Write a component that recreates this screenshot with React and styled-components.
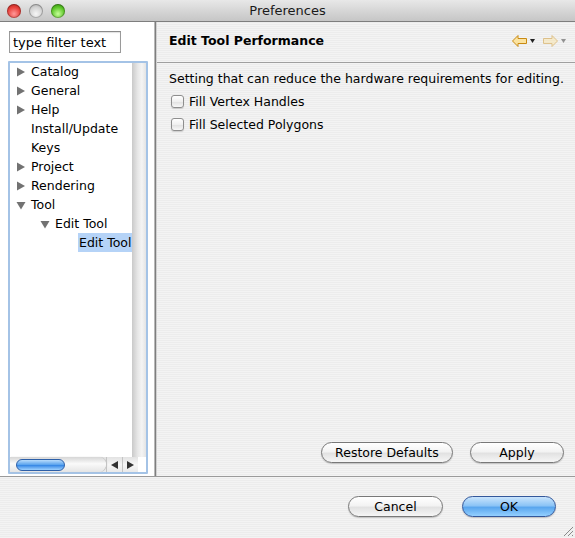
import React from 'react';
import styled, { createGlobalStyle } from 'styled-components';

const GlobalStyle = createGlobalStyle`
    html, body {
        margin: 0;
        padding: 0;
        width: 575px;
        height: 538px;
        overflow: hidden;
        font-family: 'DejaVu Sans', 'Liberation Sans', sans-serif;
        font-size: 12px;
        color: #000;
    }
`;

const TREE = [
    { label: 'Catalog', level: 0, toggle: 'closed' },
    { label: 'General', level: 0, toggle: 'closed' },
    { label: 'Help', level: 0, toggle: 'closed' },
    { label: 'Install/Update', level: 0 },
    { label: 'Keys', level: 0 },
    { label: 'Project', level: 0, toggle: 'closed' },
    { label: 'Rendering', level: 0, toggle: 'closed' },
    { label: 'Tool', level: 0, toggle: 'open' },
    { label: 'Edit Tool', level: 1, toggle: 'open' },
    { label: 'Edit Tool', level: 2, selected: true },
];

const NavArrow = ({ dir, faded }) => (
    <ArrowGroup faded={faded}>
        <svg width="15" height="12" viewBox="0 0 15 12">
            <path
                d={
                    dir === 'left'
                        ? 'M0.5 6 L6 0.5 L6 3.5 L14.5 3.5 L14.5 8.5 L6 8.5 L6 11.5 Z'
                        : 'M14.5 6 L9 0.5 L9 3.5 L0.5 3.5 L0.5 8.5 L9 8.5 L9 11.5 Z'
                }
                fill="#fbe3a0"
                stroke="#c98a12"
                strokeWidth="1"
                strokeLinejoin="round"
            />
        </svg>
        <svg width="5" height="4" viewBox="0 0 5 4">
            <path d="M0 0 L5 0 L2.5 4 Z" fill="#222" />
        </svg>
    </ArrowGroup>
);

const Twisty = ({ open }) => (
    <svg width="10" height="10" viewBox="0 0 10 10">
        {open ? (
            <path d="M0.5 2 L9.5 2 L5 9.5 Z" fill="#727272" />
        ) : (
            <path d="M1 0.5 L9 5 L1 9.5 Z" fill="#727272" />
        )}
    </svg>
);

const App = () => {
    return (
        <Window>
            <GlobalStyle />
            <TitleBar>
                <Lights>
                    <Light color="red" />
                    <Light color="gray" />
                    <Light color="green" />
                </Lights>
                <Title>Preferences</Title>
            </TitleBar>
            <Body>
                <LeftPane>
                    <Filter value="type filter text" readOnly />
                    <TreeBox>
                        <TreeMain>
                            <TreeList>
                                {TREE.map((item, i) => (
                                    <TreeRow key={i} level={item.level}>
                                        <TwistySlot>
                                            {item.toggle && (
                                                <Twisty open={item.toggle === 'open'} />
                                            )}
                                        </TwistySlot>
                                        <TreeLabel selected={item.selected}>
                                            {item.label}
                                        </TreeLabel>
                                    </TreeRow>
                                ))}
                            </TreeList>
                            <VScroll />
                        </TreeMain>
                        <HScrollRow>
                            <HTrack>
                                <HThumb />
                            </HTrack>
                            <ScrollBtn>
                                <svg width="7" height="8" viewBox="0 0 7 8">
                                    <path d="M0 4 L7 0 L7 8 Z" fill="#333" />
                                </svg>
                            </ScrollBtn>
                            <ScrollBtn>
                                <svg width="7" height="8" viewBox="0 0 7 8">
                                    <path d="M7 4 L0 0 L0 8 Z" fill="#333" />
                                </svg>
                            </ScrollBtn>
                            <Corner />
                        </HScrollRow>
                    </TreeBox>
                </LeftPane>
                <RightPane>
                    <PageHeader>
                        <PageTitle>Edit Tool Performance</PageTitle>
                        <NavArrows>
                            <NavArrow dir="left" />
                            <NavArrow dir="right" faded />
                        </NavArrows>
                    </PageHeader>
                    <PageContent>
                        <Description>
                            Setting that can reduce the hardware requirements for editing.
                        </Description>
                        <CheckRow>
                            <CheckBox />
                            Fill Vertex Handles
                        </CheckRow>
                        <CheckRow>
                            <CheckBox />
                            Fill Selected Polygons
                        </CheckRow>
                    </PageContent>
                    <PageButtons>
                        <PillButton width={132}>Restore Defaults</PillButton>
                        <PillButton width={94}>Apply</PillButton>
                    </PageButtons>
                </RightPane>
            </Body>
            <Footer>
                <PillButton width={95}>Cancel</PillButton>
                <PillButton width={94} primary>
                    OK
                </PillButton>
                <Grip>
                    <svg width="12" height="12" viewBox="0 0 12 12">
                        <path d="M11 2 L2 11 M11 6 L6 11 M11 10 L10 11" stroke="#8a8a8a" strokeWidth="1" />
                    </svg>
                </Grip>
            </Footer>
        </Window>
    );
};

export default App;

const pinstripe = `repeating-linear-gradient(
    to bottom,
    #ececec 0px,
    #ececec 1px,
    #f3f3f3 1px,
    #f3f3f3 2px
)`;

const Window = styled.div`
    position: relative;
    width: 575px;
    height: 538px;
    display: flex;
    flex-direction: column;
    background: ${pinstripe};
`;

const TitleBar = styled.div`
    height: 21px;
    border-bottom: 1px solid #7e7e7e;
    background: linear-gradient(to bottom, #e8e8e8, #d3d3d3 60%, #c6c6c6);
    display: flex;
    align-items: center;
    position: relative;
`;

const Lights = styled.div`
    display: flex;
    gap: 8px;
    padding-left: 7px;
`;

const LIGHT_COLORS = {
    red: 'radial-gradient(circle at 50% 70%, #ff9a9a 0%, #e8403a 55%, #9c1d16 100%)',
    gray: 'radial-gradient(circle at 50% 70%, #f6f6f6 0%, #d2d2d2 55%, #9a9a9a 100%)',
    green: 'radial-gradient(circle at 50% 70%, #c7ff9a 0%, #5cc628 55%, #2c7a0c 100%)',
};

const Light = styled.span`
    width: 14px;
    height: 14px;
    border-radius: 50%;
    background: ${({ color }) => LIGHT_COLORS[color]};
    box-shadow: inset 0 0 0 1px rgba(0, 0, 0, 0.25);
`;

const Title = styled.div`
    position: absolute;
    left: 0;
    right: 0;
    text-align: center;
    font-size: 13px;
    color: #1a1a1a;
    pointer-events: none;
`;

const Body = styled.div`
    flex: 1;
    display: flex;
    min-height: 0;
`;

const LeftPane = styled.div`
    width: 155px;
    background: #fff;
    border-right: 1px solid #b8b8b8;
    box-shadow: 1px 0 0 #7e7e7e;
    margin-right: 1px;
    display: flex;
    flex-direction: column;
    padding: 9px 6px 2px 8px;
    box-sizing: border-box;
`;

const Filter = styled.input`
    width: 112px;
    height: 22px;
    box-sizing: border-box;
    margin-left: 1px;
    border: 1px solid #9a9a9a;
    border-top-color: #8a8a8a;
    box-shadow: inset 0 1px 1px rgba(0, 0, 0, 0.12);
    font-family: 'DejaVu Sans', sans-serif;
    font-size: 13px;
    padding: 0 3px;
    outline: none;
`;

const TreeBox = styled.div`
    margin-top: 8px;
    flex: 1;
    border: 2px solid #a4c3e6;
    border-radius: 1px;
    display: flex;
    flex-direction: column;
    min-height: 0;
`;

const TreeMain = styled.div`
    flex: 1;
    display: flex;
    min-height: 0;
`;

const TreeList = styled.div`
    flex: 1;
    margin-top: -1px;
`;

const TreeRow = styled.div`
    height: 19px;
    display: flex;
    align-items: center;
    padding-left: ${({ level }) => 6 + level * 24}px;
    font-size: 12.5px;
`;

const TwistySlot = styled.span`
    width: 10px;
    height: 10px;
    display: flex;
    margin-right: 5px;
    flex-shrink: 0;
`;

const TreeLabel = styled.span`
    white-space: nowrap;
    line-height: 19px;
    padding: 0 1px;
    margin-left: -1px;
    background: ${({ selected }) => (selected ? '#b5d3f7' : 'transparent')};
`;

const VScroll = styled.div`
    width: 14px;
    background: linear-gradient(to right, #c9c9c9, #e6e6e6 40%, #f4f4f4 70%, #e4e4e4);
`;

const HScrollRow = styled.div`
    height: 15px;
    display: flex;
    background: linear-gradient(to bottom, #e2e2e2, #f7f7f7 50%, #e9e9e9);
`;

const HTrack = styled.div`
    width: 90px;
    padding-left: 6px;
    display: flex;
    align-items: center;
    border-radius: 0 8px 8px 0;
    background: linear-gradient(to bottom, #d6d6d6, #fafafa 45%, #e4e4e4);
    box-shadow: 1px 0 1px #bcbcbc;
`;

const HThumb = styled.div`
    width: 49px;
    height: 12px;
    border-radius: 7px;
    border: 1px solid #2d5fa8;
    box-sizing: border-box;
    background: linear-gradient(to bottom, #b9dcfb, #5fa6ee 45%, #3a8ae6 55%, #9fd2ff);
`;

const ScrollBtn = styled.div`
    width: 16px;
    display: flex;
    align-items: center;
    justify-content: center;
    border-left: 1px solid #c4c4c4;
    box-sizing: border-box;
`;

const Corner = styled.div`
    flex: 1;
    background: #fff;
`;

const RightPane = styled.div`
    flex: 1;
    display: flex;
    flex-direction: column;
    border-left: 1px solid #d0d0d0;
`;

const PageHeader = styled.div`
    height: 39px;
    display: flex;
    align-items: center;
    justify-content: space-between;
    padding: 0 10px 0 12px;
    border-bottom: 1px solid #9f9f9f;
    margin-top: 1px;
`;

const PageTitle = styled.div`
    font-weight: bold;
    font-size: 12.5px;
    margin-top: -4px;
`;

const NavArrows = styled.div`
    display: flex;
    gap: 8px;
    margin-top: -3px;
`;

const ArrowGroup = styled.div`
    display: flex;
    align-items: center;
    gap: 3px;
    opacity: ${({ faded }) => (faded ? 0.45 : 1)};
`;

const PageContent = styled.div`
    flex: 1;
    padding: 7px 12px 0 12px;
`;

const Description = styled.div`
    font-size: 12.5px;
    line-height: 17px;
    margin-bottom: 3px;
    white-space: nowrap;
`;

const CheckRow = styled.label`
    display: flex;
    align-items: center;
    height: 23px;
    font-size: 12.5px;
    padding-left: 2px;
`;

const CheckBox = styled.span`
    width: 13px;
    height: 13px;
    box-sizing: border-box;
    border: 1px solid #8e8e8e;
    border-radius: 3px;
    background: linear-gradient(to bottom, #ffffff, #f0f0f0 50%, #e0e0e0 51%, #f8f8f8);
    box-shadow: 0 1px 1px rgba(0, 0, 0, 0.15);
    margin-right: 5px;
`;

const PageButtons = styled.div`
    display: flex;
    justify-content: flex-end;
    gap: 17px;
    padding: 0 12px 13px 0;
`;

const PillButton = styled.button`
    width: ${({ width }) => width}px;
    height: 21px;
    border-radius: 11px;
    border: 1px solid ${({ primary }) => (primary ? '#33579a' : '#787878')};
    background: ${({ primary }) =>
        primary
            ? 'linear-gradient(to bottom, #c9e4fc, #8cc4f6 45%, #5aa6ee 55%, #94d0ff)'
            : 'linear-gradient(to bottom, #ffffff, #f3f3f3 45%, #e2e2e2 55%, #f6f6f6)'};
    box-shadow: 0 1px 1px rgba(0, 0, 0, 0.2);
    font-family: 'DejaVu Sans', sans-serif;
    font-size: 12.5px;
    color: #000;
    padding: 0;
    line-height: 19px;
`;

const Footer = styled.div`
    height: 62px;
    border-top: 1px solid #9a9a9a;
    display: flex;
    justify-content: flex-end;
    align-items: flex-start;
    gap: 19px;
    padding: 19px 19px 0 0;
    box-sizing: border-box;
    position: relative;
`;

const Grip = styled.div`
    position: absolute;
    right: 1px;
    bottom: 1px;
    width: 12px;
    height: 12px;
    display: flex;
`;
